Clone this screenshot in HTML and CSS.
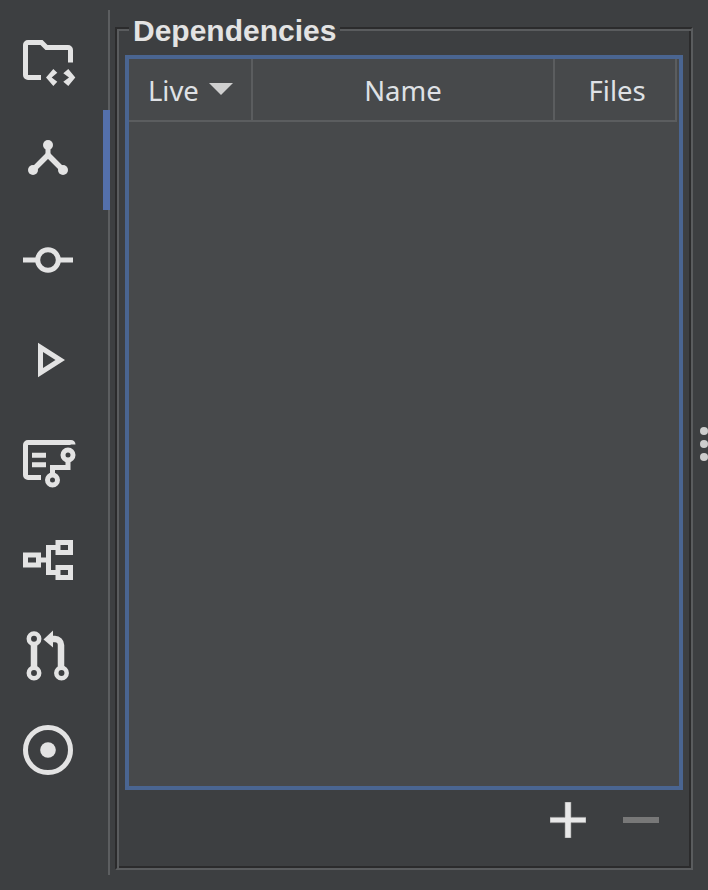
FILE: index.html
```html
<!DOCTYPE html>
<html lang="en">
<head>
<meta charset="utf-8">
<title>Dependencies</title>
<link rel="stylesheet" href="styles.css">
</head>
<body>
<div class="app">
  <nav class="rail">
    <div class="rail-item">
      <svg class="icon" viewBox="18 30 60 60"><path class="s" d="M41 77.500H28a2.500 2.500 0 0 1-2.500-2.500V45a2.500 2.500 0 0 1 2.500-2.500H41.500L46.500 47.500H68a2.500 2.500 0 0 1 2.500 2.500V62.500"/><path class="f" d="M53.300 69L57.300 72.700L51.700 77.400L57.300 81.700L53.300 86L46 77.400ZM68.300 69L75.300 77.400L68.300 86L63.300 81.700L69 77.400L63.300 73.300Z"/></svg>
    </div>
    <div class="rail-item">
      <svg class="icon" viewBox="18 130 60 60"><path class="s" d="M48 145V157"/><path class="s legs" d="M33 170L48 155L63 170"/><circle class="f" cx="48" cy="145" r="5"/><circle class="f" cx="33" cy="170" r="5"/><circle class="f" cx="63" cy="170" r="5"/></svg>
    </div>
    <div class="rail-item">
      <svg class="icon" viewBox="18 230 60 60"><path class="s" d="M23 260H37M59 260H73"/><circle class="s" cx="48" cy="260" r="10.300"/></svg>
    </div>
    <div class="rail-item">
      <svg class="icon" viewBox="18 330 60 60"><path class="f" fill-rule="evenodd" d="M38 342.700L65 360L38 377.300ZM43 352V368L55.500 360Z"/></svg>
    </div>
    <div class="rail-item">
      <svg class="icon" viewBox="18 430 60 60"><path class="s" d="M41 477.500H28a2.500 2.500 0 0 1-2.500-2.500V445a2.500 2.500 0 0 1 2.500-2.500H71a2 2 0 0 1 2 2"/><path class="s" d="M32 455.300H46M32 464.700H46"/><circle class="s" cx="68" cy="455" r="5"/><circle class="s" cx="52.500" cy="480" r="5"/><path class="s" d="M68 460V467.500H52.500V475"/></svg>
    </div>
    <div class="rail-item">
      <svg class="icon" viewBox="18 530 60 60"><path class="s" d="M25.500 555H38.500V565H25.500ZM58 542.500H70.500V552.500H58ZM58 567.500H70.500V577.500H58Z"/><path class="s" d="M41 560H48.500M56 547.500H48.500V572.500H56"/></svg>
    </div>
    <div class="rail-item rail-item-short">
      <svg class="icon" viewBox="18 628 60 60"><path class="s thick" d="M34 644V667M61 667V645a6 6 0 0 0-6-6H50"/><path class="f" d="M43.500 639.500L53 630.500V647.500Z"/><circle class="s3" cx="34" cy="638.700" r="5.200"/><circle class="s3" cx="34" cy="673" r="5.200"/><circle class="s3" cx="61.500" cy="673" r="5.200"/></svg>
    </div>
    <div class="rail-item rail-item-last">
      <svg class="icon" viewBox="18 720 60 60"><circle class="s" cx="48" cy="750" r="22.500"/><circle class="f" cx="48" cy="750" r="7.800"/></svg>
    </div>
    <div class="rail-marker"></div>
  </nav>

  <section class="group">
    <h2 class="group-title">Dependencies</h2>
    <div class="table">
      <div class="thead">
        <div class="th th-live">Live <svg class="sort" viewBox="0 0 24 12"><path d="M0 0H24L12 12Z"/></svg></div>
        <div class="th th-name">Name</div>
        <div class="th th-files">Files</div>
      </div>
    </div>
    <div class="toolbar">
      <svg class="tool" viewBox="0 0 36 36"><path class="plus" d="M0 15.300H15V0H21V15.300H36V20.700H21V36H15V20.700H0Z"/></svg>
      <svg class="tool tool-minus" viewBox="0 0 36 36"><path class="minus" d="M0 15H36V21H0Z"/></svg>
    </div>
  </section>

  <div class="grip"><span></span><span></span><span></span></div>
</div>
</body>
</html>
```

FILE: styles.css
```css
html, body {
  margin: 0;
  height: 100%;
  background: #3d3f41;
  overflow: hidden;
}
.app {
  position: relative;
  width: 708px;
  height: 890px;
  display: flex;
  align-items: flex-start;
  font-family: "Noto Sans", "Open Sans", sans-serif;
  color: #dfe1e5;
}
.rail {
  position: relative;
  box-sizing: content-box;
  width: 108px;
  height: 865px;
  margin-top: 10px;
  border-right: 2px solid #5c5e60;
  flex: none;
}
.rail-item {
  height: 100px;
  display: flex;
  align-items: center;
  padding-left: 18px;
}
.rail-item-short { height: 96px; }
.rail-item-last { height: 88px; }
.icon { width: 60px; height: 60px; display: block; }
.rail-marker {
  position: absolute;
  top: 100px;
  right: -2px;
  width: 7px;
  height: 100px;
  background: #5470ab;
}
.s { fill: none; stroke: #e3e3e3; stroke-width: 5; }
.s3 { fill: none; stroke: #e3e3e3; stroke-width: 4.5; }
.thick { stroke-width: 6.500; }
.legs { stroke-width: 5.500; }
.f { fill: #e3e3e3; }

.group {
  position: relative;
  box-sizing: border-box;
  width: 578px;
  height: 843px;
  margin: 27px 0 0 5px;
  flex: none;
  border: 2px solid;
  border-color: #2b2b2c #5a5c5e #5a5c5e #2b2b2c;
  box-shadow: inset 2px 2px 0 #5a5c5e, inset -2px -2px 0 #2b2b2c;
  padding: 26px 8px 0 8px;
}
.group-title {
  position: absolute;
  top: -15px;
  left: 12px;
  margin: 0;
  padding: 0 4px;
  background: #3d3f41;
  font: bold 30px/34px "Liberation Sans", Arial, sans-serif;
  color: #e3e3e3;
}
.table {
  box-sizing: border-box;
  height: 735px;
  border: 4px solid #4a6591;
  background: #47494b;
  padding-right: 2px;
}
.thead {
  display: flex;
  height: 63px;
  box-sizing: border-box;
  border-bottom: 2px solid #5b5d5f;
}
.th {
  box-sizing: border-box;
  border-right: 2px solid #5b5d5f;
  display: flex;
  align-items: center;
  justify-content: center;
  font-size: 27.500px;
  padding-top: 1px;
}
.th-live { width: 124px; gap: 10px; padding-left: 1px; }
.th-name { width: 303px; }
.th-files { width: 122px; padding-left: 4px; }
.sort { width: 24px; height: 12px; fill: #cfcfcf; margin-top: -2px; }
.toolbar {
  display: flex;
  justify-content: flex-end;
  gap: 37px;
  padding: 12px 24px 0 0;
}
.tool { width: 36px; height: 36px; display: block; }
.plus { fill: #e8e8e8; stroke: #8a8a8a; stroke-width: 0.6; }
.minus { fill: #787878; }
.grip {
  position: absolute;
  left: 700px;
  top: 427px;
  display: flex;
  flex-direction: column;
  gap: 5px;
}
.grip span {
  width: 8px;
  height: 8px;
  border-radius: 50%;
  background: #cdcdcd;
}
```
